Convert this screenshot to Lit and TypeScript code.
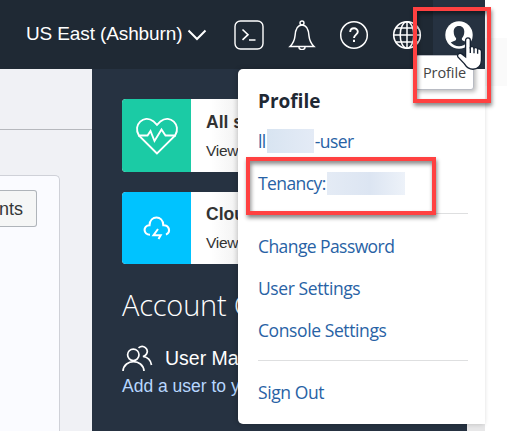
import { LitElement, html, css } from "lit";
import { customElement } from "lit/decorators.js";

const icons = {
  chevron: html`<svg class="chevron" width="20" height="14" viewBox="0 0 20 14"><path d="M1.500 2.500 10 11l8.500-8.500" stroke-width="2"/></svg>`,
  shell: html`<svg width="30" height="30" viewBox="0 0 30 30"><rect x="1" y="1" width="28" height="28" rx="5.500" stroke-width="1.400"/><path d="m8.500 9.500 5.500 5.200-5.500 5.200M15 20h6.500" stroke-width="1.600"/></svg>`,
  bell: html`<svg width="28" height="30" viewBox="0 0 28 30"><path d="M2 26.500h24c-3-3-4.500-5.500-5-10.500-.4-6-1.500-11-7-11s-6.600 5-7 11c-.5 5-2 7.500-5 10.500Z" stroke-width="1.500"/><circle cx="14" cy="3" r="2" stroke-width="1.400"/><path d="M10.800 26.500a3.200 3.100 0 0 0 6.400 0" stroke-width="1.400"/></svg>`,
  help: html`<svg width="30" height="30" viewBox="0 0 30 30"><circle cx="15" cy="15" r="13.300" stroke-width="1.500"/><path d="M11.200 12.100c0-5 7.600-5 7.600-.3 0 2.700-3.800 3-3.800 6.200" stroke-width="1.900"/><path d="M15 19.800v2.200" stroke-width="2"/></svg>`,
  globe: html`<svg width="30" height="30" viewBox="0 0 30 30"><circle cx="15" cy="15" r="13.300" stroke-width="1.600"/><ellipse cx="15" cy="15" rx="6.800" ry="13.300" stroke-width="1.500"/><path d="M15 1.500v27M1.700 15h26.600M4 8h22M4 22h22" stroke-width="1.500"/></svg>`,
  avatar: html`<svg width="28" height="28" viewBox="0 0 28 28"><circle cx="14" cy="14" r="13.700" fill="#fff" stroke="none"/><path d="M14 5c-3.600 0-5.300 2.500-5.300 5.500 0 3.400 1 5.100 2.300 6.600.5 1.600-.3 2.300-2 3L5.700 21.500a11.300 11.300 0 0 0 16.600 0L19 20.100c-1.700-.7-2.500-1.400-2-3 1.300-1.500 2.300-3.200 2.300-6.600C19.300 7.500 17.600 5 14 5Z" fill="#263241" stroke="none"/></svg>`,
  heart: html`<svg width="44" height="38" viewBox="0 0 44 38"><path d="M22 36.500 3.800 18.300C-2.500 8 9-3 18.300 4.200L22 8l3.700-3.800C35-3 46.500 8 40.200 18.300Z" stroke-width="1.900"/><path d="M3 18.500h9.500l3-4.500 4 10 7-11.500 4 6H41" stroke-width="1.900"/></svg>`,
  cloud: html`<svg width="28" height="24" viewBox="0 0 28 24"><path d="M7 18.700C0 18.700-.3 9.500 6.500 9.300 7-1 20-1 20.300 9.200c6.500-.2 7.500 7.300 2.700 9.400" stroke-width="2.100"/><path d="m15 13-4.500 6.200h7.200L15.500 23" stroke-width="2"/></svg>`,
  people: html`<svg width="31" height="27" viewBox="0 0 31 27"><circle cx="11.300" cy="9.800" r="5.700" stroke-width="1.700"/><path d="M1 26c1-12.500 20-12.500 21 0M16.500 2.800c5-4 10.700 1.400 8 6.200-.8 1.400-2 2-3.500 2.500 5 .7 7.700 3.500 8.500 8.500" stroke-width="1.700"/></svg>`,
  hand: html`<svg class="hand" width="28" height="35" viewBox="0 0 27 34"><path d="M11.500.9c1.400 0 2.300 1 2.300 2.300v6.600c.9-.9 3.200-.7 3.600.9 1-.8 3.200-.5 3.500 1.100 1.300-.6 3.700 0 3.700 2.300v8.400c0 5.300-3.500 8.800-8.200 8.800-4.300 0-6.200-1.700-8.500-5.400L1.700 19.400c-1.100-2.200 1-4.400 3.500-3.200l4 3.100V3.200C9.200 1.900 10.100.9 11.500.9Z" fill="#fff" stroke="#152030" stroke-width="1.300"/><path d="M13.800 9.800v5.700M17.400 10.700v5M20.900 11.800v4.500" stroke="#152030" stroke-width="1.300"/></svg>`,
};

@customElement("app-root")
export class AppRoot extends LitElement {
  static styles = css`
    :host {
      display: block;
      position: relative;
      width: 507px;
      height: 431px;
      overflow: hidden;
      background: #fff;
      font-family: "Liberation Sans", Arial, sans-serif;
      white-space: nowrap;
    }
    * { box-sizing: border-box; }
    svg { display: block; flex: none; fill: none; stroke: #fff; }
    .page { width: 485px; height: 431px; display: grid; grid-template-rows: 69px 1fr; }
    .bar { background: #1f2934; display: flex; align-items: center; color: #fff; }
    .region { width: 182px; padding-left: 26px; font-size: 19px; line-height: 24px; margin-top: -1px; letter-spacing: -.12px; }
    .chevron { margin-left: 5px; margin-right: 27px; }
    .tools { display: flex; align-items: center; }
    .bell { margin: 0 23px 0 24px; }
    .globe { margin-left: 23px; }
    .user { margin-left: 11px; width: 52px; height: 69px; background: #263241; display: flex; align-items: center; padding-left: 12px; }
    .content { display: grid; grid-template-columns: 92px 375px 18px; min-height: 0; }
    .main { background: #f0f1f5; display: grid; grid-template-rows: 61px 1fr; overflow: hidden; }
    .top { border-bottom: 1px solid #b6b8bd; }
    .panel { margin-top: 45px; width: 60px; border: 1px solid #cfd1d8; border-left: 0; border-bottom: 0; border-top-right-radius: 5px; background: #fafbff; padding-top: 14px; overflow: hidden; }
    .button { width: 37px; height: 37px; border: 1px solid #afb4ba; border-left: 0; border-radius: 0 3px 3px 0; background: #f5f6f6; color: #343638; font-size: 18px; line-height: 36px; text-indent: -1px; }
    .side { background: #263241; padding: 30px 0 0 30px; overflow: hidden; }
    .card { width: 250px; height: 73px; border-radius: 4px; overflow: hidden; background: #fff; display: flex; color: #333; }
    .card + .card { margin-top: 20px; height: 72px; }
    .tile { width: 69px; display: grid; place-items: center; flex: none; }
    .green { background: #1bcba5; }
    .blue { background: #00c3ff; }
    .copy { flex: 1; padding: 13px 0 0 15px; background: linear-gradient(90deg, #fff 20px, #f1f1f1 50px); }
    .card + .card .copy { padding-top: 12px; }
    .copy b { display: block; font-size: 17.500px; line-height: 20px; }
    .copy span { display: block; margin-top: 10px; font-size: 15.500px; line-height: 17px; letter-spacing: -.3px; }
    .side h2 { margin: 20px 0 0; font: 300 29px/42px "Open Sans", "Noto Sans", sans-serif; color: #fff; letter-spacing: -.2px; }
    .manage { display: flex; align-items: center; gap: 12px; color: #fff; font-size: 19.500px; height: 30px; margin-top: 17px; }
    .add { color: #b7d7ff; font-size: 17.500px; line-height: 20px; margin-top: 3px; }
    .gutter { background: #e7e7e8; }
    .menu { position: absolute; left: 238px; top: 69px; width: 247px; height: 355px; border-radius: 5px 0 0 5px; background: #fff; padding: 19px 17px 0 20px; box-shadow: -1px 0 5px #0003; font-family: "Open Sans", "Noto Sans", sans-serif; color: #2862a5; font-size: 17.500px; }
    .title { color: #1f2934; font-weight: 700; font-size: 19px; line-height: 26px; }
    .row { display: flex; align-items: center; height: 42px; letter-spacing: -.58px; }
    .settings { letter-spacing: -.4px; }
    .first { margin-top: 6px; }
    .mask { height: 24px; background: linear-gradient(90deg, #d8e4f1, #e4ebf6); }
    .mask.name { width: 47px; margin: 0 1px; }
    .mask.tenant { width: 78px; height: 23px; margin-left: 1px; background: linear-gradient(90deg, #e4ebf5, #dce5f2 55%, #edf2f9); }
    .rule { height: 1px; background: #dedfe0; }
    .r1 { margin: 9px 0 11px; }
    .r2 { margin: 9px 0 10px; }
    .edge { position: absolute; left: 485px; top: 38px; width: 22px; height: 48px; background: #fafafa; }
    .tip { position: absolute; left: 415px; top: 55px; width: 59px; height: 35px; background: #fff; border: 1px solid #b8bbc3; border-radius: 3px; box-shadow: 2px 2px 4px #0004; font: 14.500px/33px "Open Sans", "Noto Sans", sans-serif; color: #444; padding-left: 7px; letter-spacing: -.1px; }
    .mark { position: absolute; border: 4px solid #ff4141; box-shadow: 1px 3px 4px #0007, inset 1px 3px 4px #0007; }
    .m1 { left: 413px; top: 7px; width: 78px; height: 96px; }
    .m2 { left: 246px; top: 157px; width: 190px; height: 58px; }
    .hand { position: absolute; left: 456px; top: 37px; }
  `;

  render() {
    return html`
      <div class="page">
        <header class="bar">
          <span class="region">US East (Ashburn)</span>${icons.chevron}
          <div class="tools">
            ${icons.shell}<span class="bell">${icons.bell}</span>${icons.help}<span class="globe">${icons.globe}</span>
            <div class="user">${icons.avatar}</div>
          </div>
        </header>
        <div class="content">
          <main class="main">
            <div class="top"></div>
            <div class="panel"><div class="button">nts</div></div>
          </main>
          <aside class="side">
            <div class="card"><div class="tile green">${icons.heart}</div><div class="copy"><b>All s</b><span>View</span></div></div>
            <div class="card"><div class="tile blue">${icons.cloud}</div><div class="copy"><b>Clou</b><span>View</span></div></div>
            <h2>Account C</h2>
            <div class="manage">${icons.people}<span>User Ma</span></div>
            <div class="add">Add a user to y</div>
          </aside>
          <div class="gutter"></div>
        </div>
      </div>
      <div class="edge"></div>
      <nav class="menu">
        <div class="title">Profile</div>
        <div class="row first">ll<span class="mask name"></span>-user</div>
        <div class="row">Tenancy:<span class="mask tenant"></span></div>
        <div class="rule r1"></div>
        <div class="row">Change Password</div>
        <div class="row settings">User Settings</div>
        <div class="row settings">Console Settings</div>
        <div class="rule r2"></div>
        <div class="row settings">Sign Out</div>
      </nav>
      <div class="tip">Profile</div>
      <div class="mark m1"></div>
      <div class="mark m2"></div>
      ${icons.hand}
    `;
  }
}
